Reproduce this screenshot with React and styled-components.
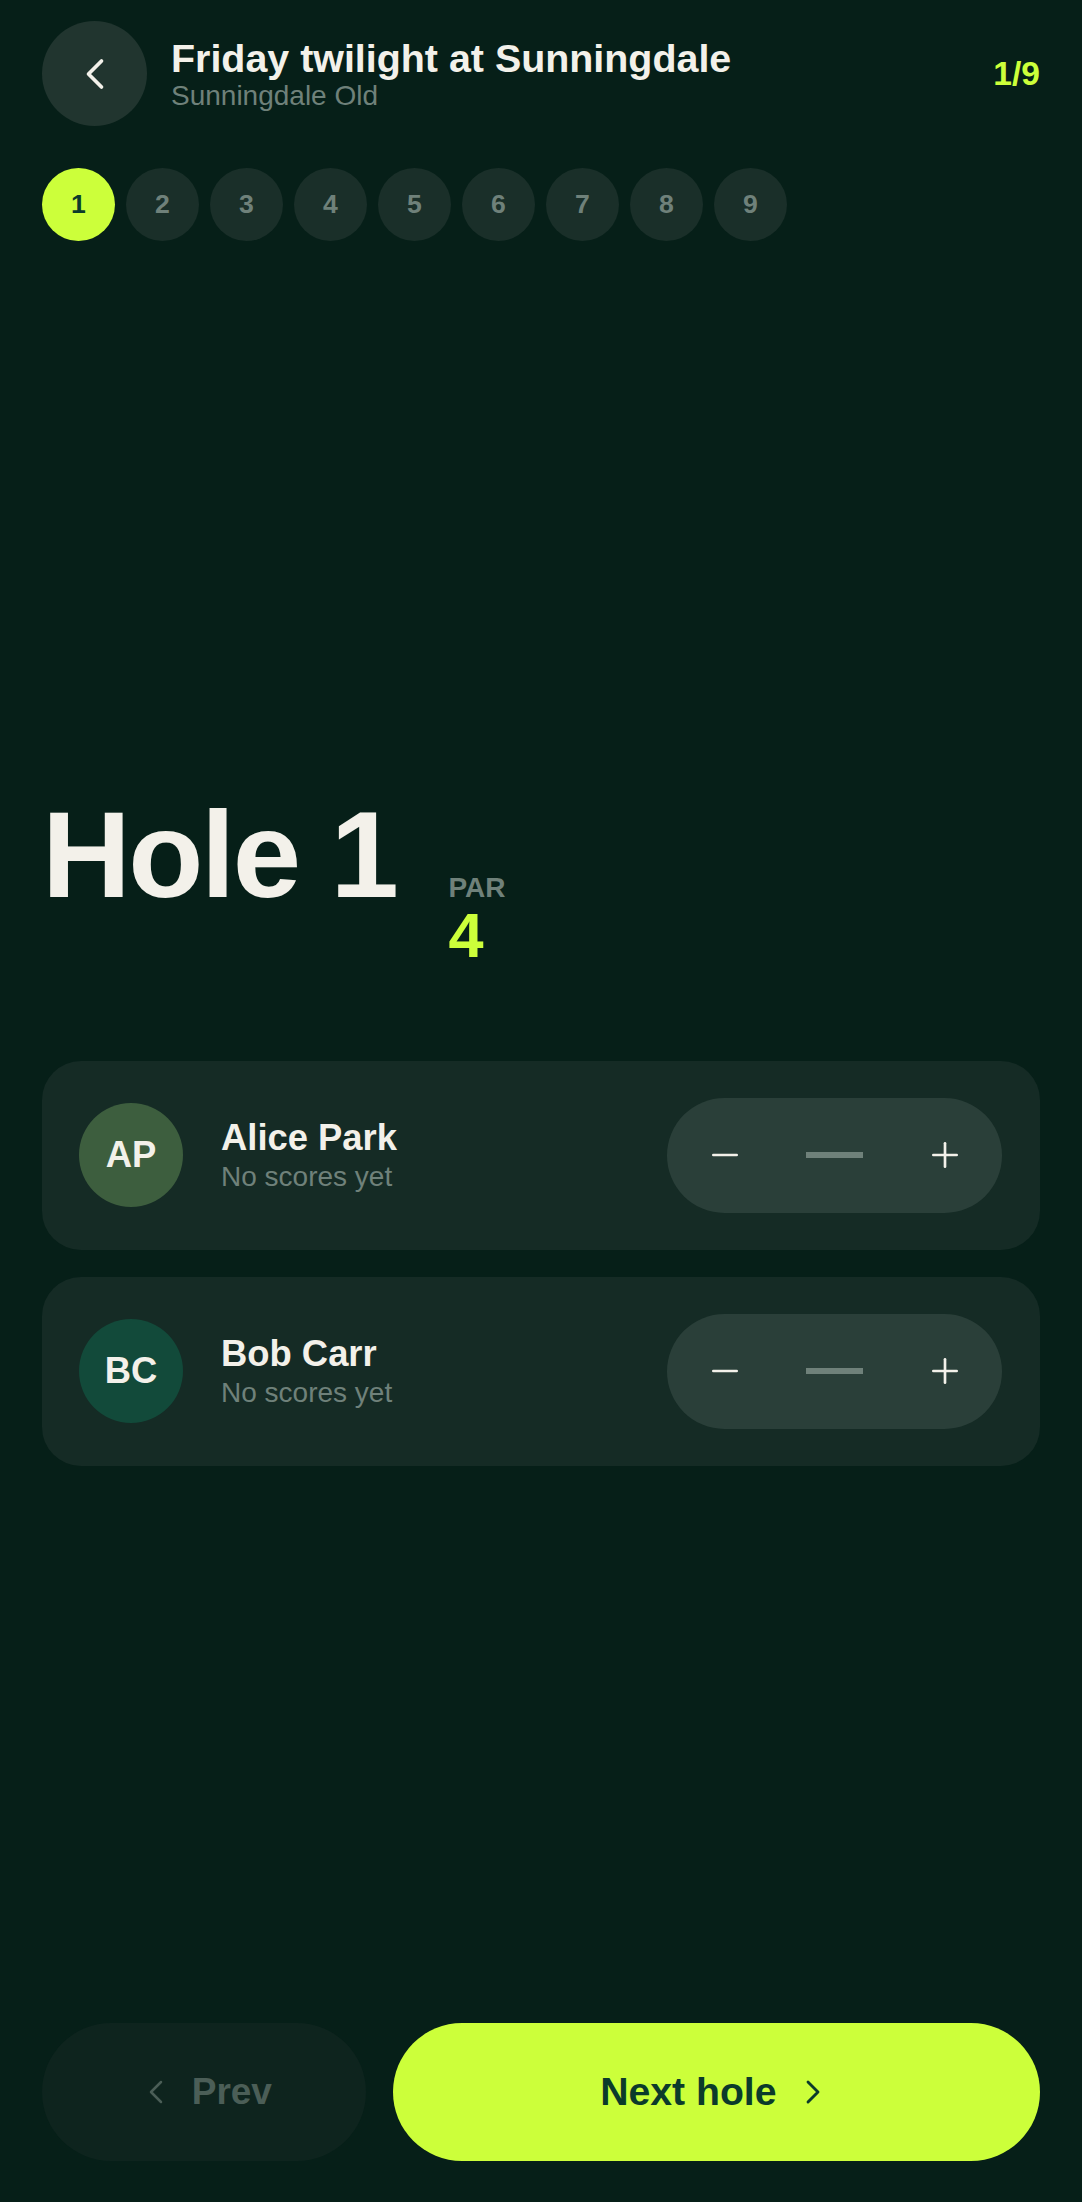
import styled, { createGlobalStyle } from 'styled-components';
import { ChevronLeft, ChevronRight, Minus, Plus } from 'lucide-react';

const colors = {
  bg: '#061f18',
  card: '#152b25',
  chip: '#1a2f29',
  back: '#21352f',
  stepper: '#2a3f39',
  text: '#f3f1ea',
  muted: '#6f817a',
  lime: '#ccff3a',
  onLime: '#0b3b2b',
  prevBg: '#0e241e',
  prevText: '#4b5e57',
};

const GlobalStyle = createGlobalStyle`
  * { box-sizing: border-box; }
  html, body { margin: 0; padding: 0; background: ${colors.bg}; }
  body {
    font-family: "Liberation Sans", Arial, sans-serif;
    color: ${colors.text};
  }
  button { font-family: inherit; cursor: pointer; }
`;

const Page = styled.div`
  min-height: 100vh;
  display: flex;
  flex-direction: column;
  padding: 21px 42px 41px;
`;

const Header = styled.header`
  display: flex;
  align-items: center;
  gap: 24px;
`;

const BackButton = styled.button`
  width: 105px;
  height: 105px;
  flex-shrink: 0;
  border: 0;
  border-radius: 50%;
  background: ${colors.back};
  color: ${colors.text};
  display: flex;
  align-items: center;
  justify-content: center;
  padding: 0;
`;

const TitleBlock = styled.div`
  flex: 1;
  min-width: 0;
  margin-top: 2px;
`;

const Title = styled.h1`
  margin: 0;
  font-size: 39.4px;
  font-weight: 700;
  line-height: 1.1;
  color: ${colors.text};
`;

const Subtitle = styled.p`
  margin: 0;
  font-size: 28px;
  line-height: 1.15;
  color: ${colors.muted};
`;

const Progress = styled.span`
  font-size: 33.6px;
  font-weight: 700;
  color: ${colors.lime};
`;

const HoleStrip = styled.nav`
  display: flex;
  gap: 11.2px;
  margin-top: 42px;
`;

const HoleChip = styled.button`
  width: 72.8px;
  height: 72.8px;
  border: 0;
  border-radius: 50%;
  padding: 0;
  font-size: 26.6px;
  font-weight: 700;
  background: ${({ $active }) => ($active ? colors.lime : colors.chip)};
  color: ${({ $active }) => ($active ? colors.onLime : colors.muted)};
`;

const Main = styled.main`
  flex: 1;
  display: flex;
  flex-direction: column;
  justify-content: center;
  padding-bottom: 5px;
`;

const HoleRow = styled.div`
  display: flex;
  align-items: baseline;
  gap: 52px;
`;

const HoleTitle = styled.h2`
  margin: 0;
  font-size: 123px;
  font-weight: 700;
  line-height: 1;
  letter-spacing: -0.02em;
  color: ${colors.text};
`;

const ParBlock = styled.div`
  display: flex;
  flex-direction: column;
`;

const ParLabel = styled.span`
  font-size: 28px;
  font-weight: 700;
  line-height: 1.15;
  color: ${colors.muted};
`;

const ParValue = styled.span`
  font-size: 63px;
  font-weight: 700;
  line-height: 1;
  color: ${colors.lime};
`;

const PlayerList = styled.div`
  display: flex;
  flex-direction: column;
  gap: 27px;
  margin-top: 94px;
`;

const PlayerCard = styled.div`
  display: flex;
  align-items: center;
  padding: 37px 38px 37px 37px;
  border-radius: 39px;
  background: ${colors.card};
`;

const Avatar = styled.div`
  width: 104px;
  height: 104px;
  flex-shrink: 0;
  border-radius: 50%;
  background: ${({ $tone }) => $tone};
  display: flex;
  align-items: center;
  justify-content: center;
  font-size: 36.4px;
  font-weight: 700;
  color: ${colors.text};
`;

const PlayerInfo = styled.div`
  flex: 1;
  margin-left: 38px;
`;

const PlayerName = styled.div`
  font-size: 36.4px;
  font-weight: 700;
  line-height: 1.15;
  color: ${colors.text};
`;

const PlayerNote = styled.div`
  font-size: 28px;
  line-height: 1.2;
  margin-top: 1px;
  color: ${colors.muted};
`;

const Stepper = styled.div`
  display: flex;
  align-items: center;
  height: 115px;
  border-radius: 58px;
  background: ${colors.stepper};
`;

const StepButton = styled.button`
  width: 115px;
  height: 115px;
  border: 0;
  padding: 0;
  background: transparent;
  color: ${colors.text};
  display: flex;
  align-items: center;
  justify-content: center;
`;

const ScoreSlot = styled.div`
  width: 105px;
  display: flex;
  justify-content: center;
`;

const EmptyScore = styled.span`
  display: block;
  width: 57px;
  height: 6px;
  background: ${colors.muted};
`;

const Footer = styled.footer`
  display: flex;
  gap: 27px;
`;

const NavButton = styled.button`
  flex: ${({ $primary }) => ($primary ? 2 : 1)} 1 0;
  min-width: 0;
  height: 138px;
  padding: 0;
  border: 0;
  border-radius: 69px;
  display: flex;
  align-items: center;
  justify-content: center;
  gap: 16px;
  font-size: ${({ $primary }) => ($primary ? '39.2px' : '37px')};
  font-weight: 700;
  background: ${({ $primary }) => ($primary ? colors.lime : colors.prevBg)};
  color: ${({ $primary }) => ($primary ? colors.onLime : colors.prevText)};
`;

const players = [
  { initials: 'AP', name: 'Alice Park', tone: '#3d5e3e' },
  { initials: 'BC', name: 'Bob Carr', tone: '#124a3a' },
];

const holes = [1, 2, 3, 4, 5, 6, 7, 8, 9];

const App = () => {
  const current = 1;

  return (
    <>
      <GlobalStyle />
      <Page>
        <Header>
          <BackButton aria-label="Back">
            <ChevronLeft size={52} strokeWidth={1.7} />
          </BackButton>
          <TitleBlock>
            <Title>Friday twilight at Sunningdale</Title>
            <Subtitle>Sunningdale Old</Subtitle>
          </TitleBlock>
          <Progress>{current}/{holes.length}</Progress>
        </Header>

        <HoleStrip>
          {holes.map((n) => (
            <HoleChip key={n} $active={n === current}>{n}</HoleChip>
          ))}
        </HoleStrip>

        <Main>
          <HoleRow>
            <HoleTitle>Hole {current}</HoleTitle>
            <ParBlock>
              <ParLabel>PAR</ParLabel>
              <ParValue>4</ParValue>
            </ParBlock>
          </HoleRow>

          <PlayerList>
            {players.map((p) => (
              <PlayerCard key={p.initials}>
                <Avatar $tone={p.tone}>{p.initials}</Avatar>
                <PlayerInfo>
                  <PlayerName>{p.name}</PlayerName>
                  <PlayerNote>No scores yet</PlayerNote>
                </PlayerInfo>
                <Stepper>
                  <StepButton aria-label="Decrease">
                    <Minus size={40} strokeWidth={1.6} />
                  </StepButton>
                  <ScoreSlot>
                    <EmptyScore />
                  </ScoreSlot>
                  <StepButton aria-label="Increase">
                    <Plus size={40} strokeWidth={1.6} />
                  </StepButton>
                </Stepper>
              </PlayerCard>
            ))}
          </PlayerList>
        </Main>

        <Footer>
          <NavButton>
            <ChevronLeft size={40} strokeWidth={1.5} />
            Prev
          </NavButton>
          <NavButton $primary>
            Next hole
            <ChevronRight size={40} strokeWidth={1.7} />
          </NavButton>
        </Footer>
      </Page>
    </>
  );
};

export default App;
